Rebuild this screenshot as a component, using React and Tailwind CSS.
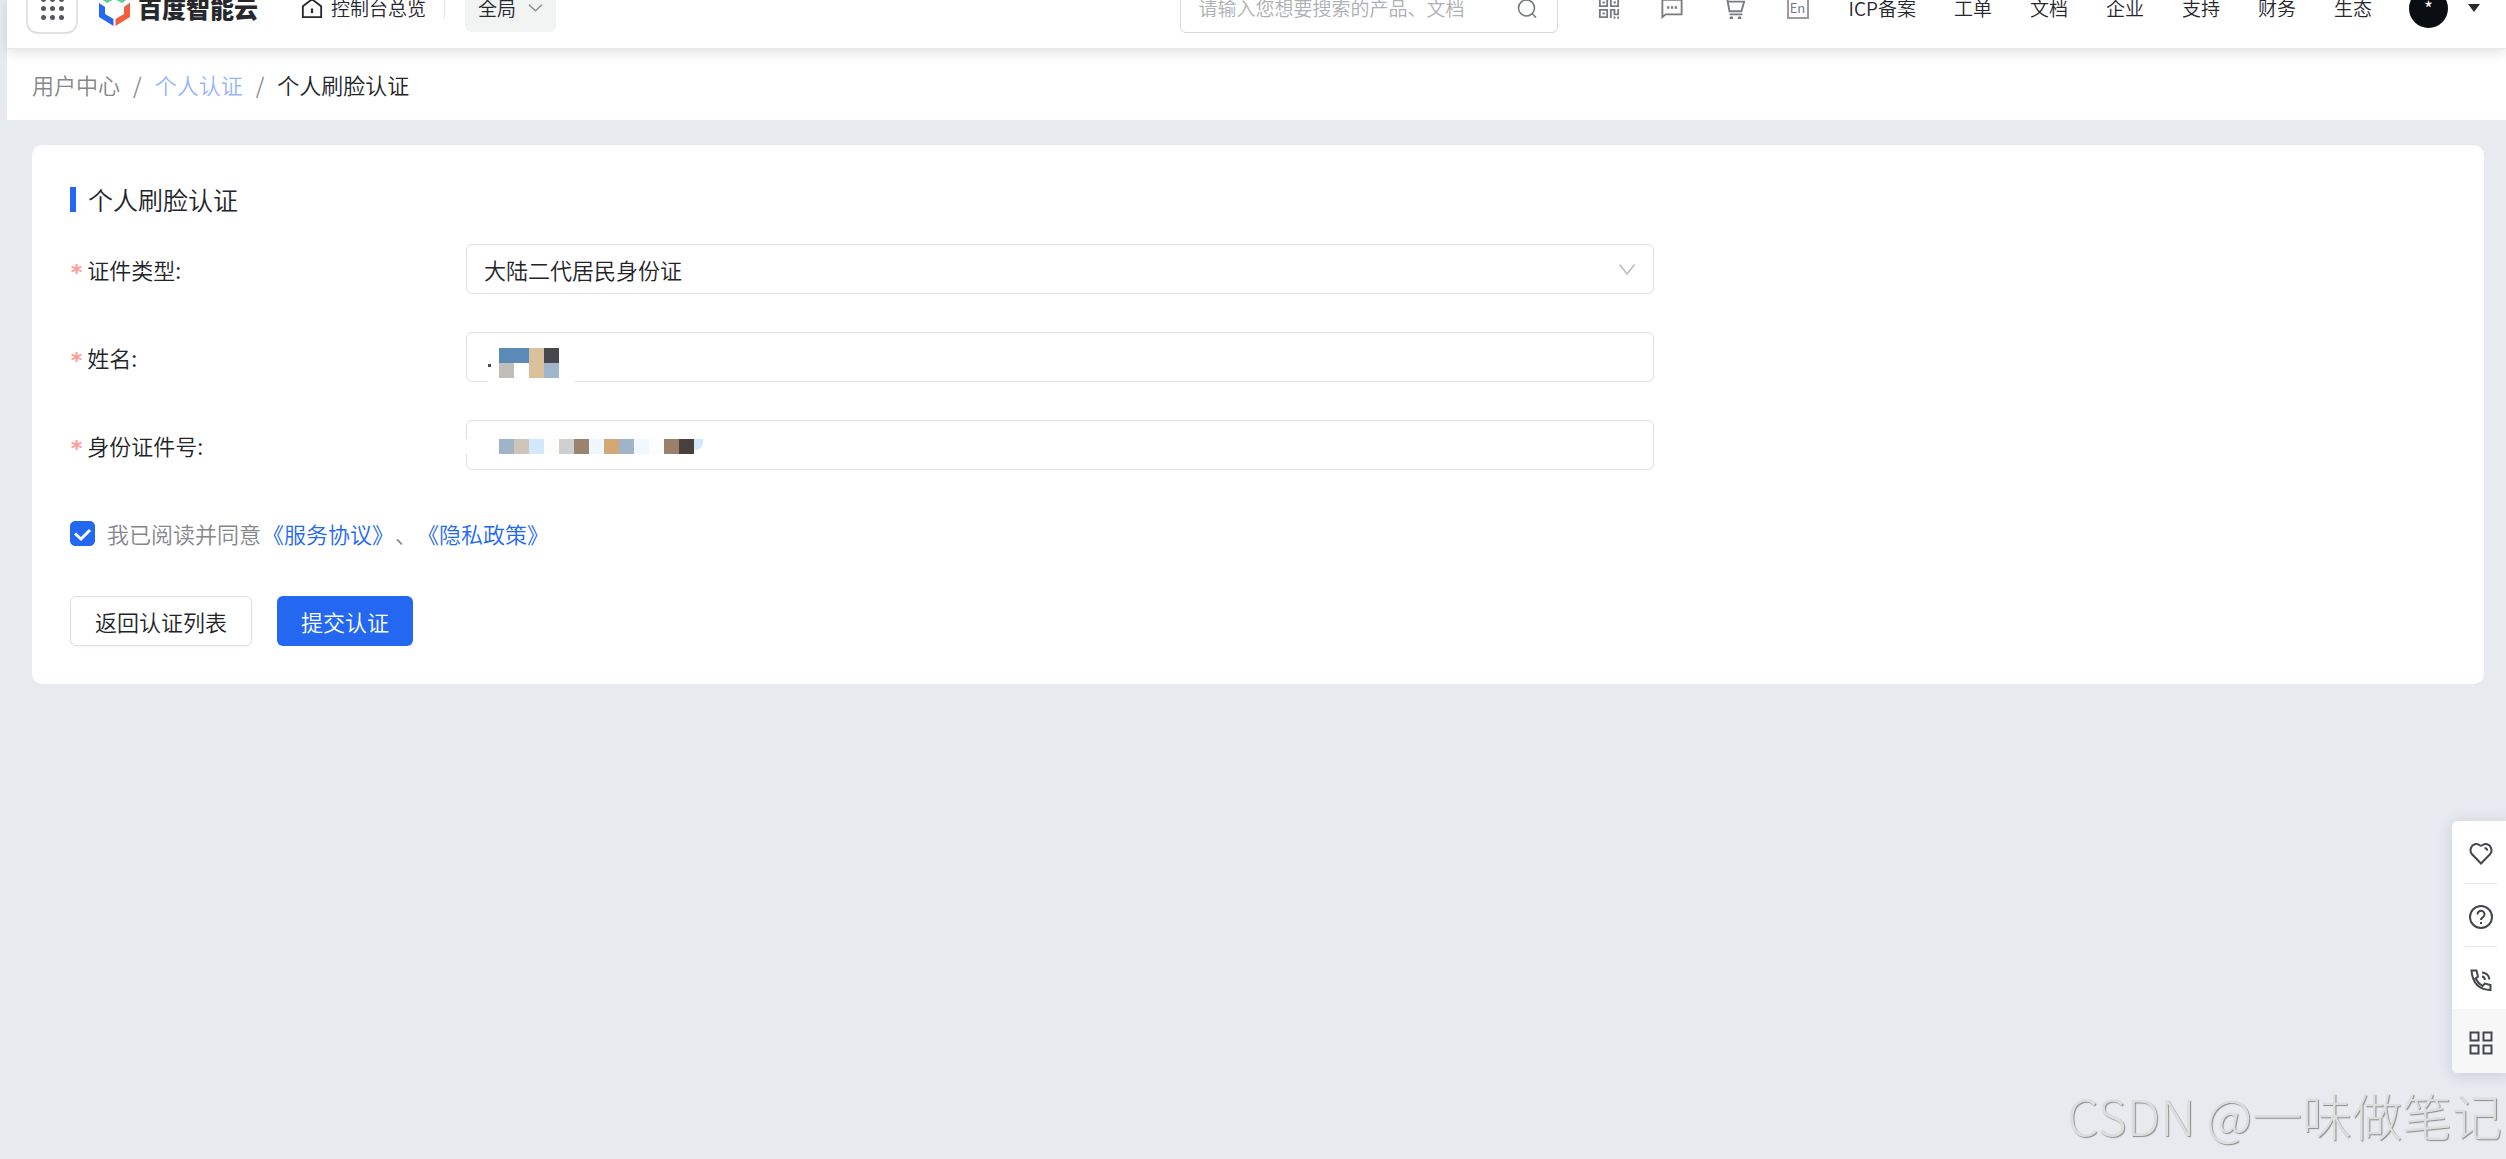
import { useState } from 'react';

const NAV_LINKS = ['ICP备案', '工单', '文档', '企业', '支持', '财务', '生态'];

const NAME_MASK = [
  ['bg-[#5a8bb8]', 'bg-[#5a8bb8]', 'bg-[#dac19c]', 'bg-[#48484a]'],
  ['bg-[#c1bdb9]', 'bg-white', 'bg-[#dac19c]', 'bg-[#9fb5cc]'],
];

const ID_MASK = [
  [
    'bg-[#9fb4c8]',
    'bg-[#cec4b7]',
    'bg-[#d3e8fc]',
    'bg-[#fdfcf8]',
    'bg-[#cdcfd1]',
    'bg-[#9c8370]',
    'bg-[#eef7fe]',
    'bg-[#d3a877]',
    'bg-[#9fb4c8]',
    'bg-[#f0f9ff]',
    'bg-[#fdfdfd]',
    'bg-[#9c7f6b]',
    'bg-[#47403c]',
  ],
];

function Icon({ size = 'size-[22px]', children }) {
  return (
    <svg
      className={`${size} shrink-0`}
      viewBox="0 0 24 24"
      fill="none"
      stroke="currentColor"
      strokeWidth={2}
      aria-hidden="true"
    >
      {children}
    </svg>
  );
}

function Logo() {
  return (
    <a href="#home" className="flex items-center gap-2">
      <svg className="h-9 w-[31px]" viewBox="0 0 31 36" aria-hidden="true">
        <path d="M0 13l6 4v7l8.500 5v7L0 27z" fill="#2468f2" />
        <path d="M31 12.500l-6 4.500v7l-8.500 5v7L31 27z" fill="#f0603f" />
        <path d="M1 8L15.500 0 30 8l-7 5-7.500-4L8 13z" fill="#5fcf8c" />
      </svg>
      <span className="text-[24px] leading-8 font-black text-[#26282c]">百度智能云</span>
    </a>
  );
}

function Header() {
  return (
    <header className="h-[49px] overflow-hidden border-b border-[#e9e9e9] bg-white">
      <div className="-mt-8 flex h-20 items-center pr-[26px] pl-[19px] text-[19px] leading-8 font-[350] text-[#26282e]">
        <button
          type="button"
          aria-label="产品"
          className="mr-[21px] flex size-[52px] shrink-0 items-center justify-center rounded-xl border-2 border-[#e2e2e2]"
        >
          <span className="grid grid-cols-3 gap-1">
            {Array.from({ length: 9 }, (_, i) => (
              <span key={i} className="size-[5px] rounded-full bg-[#55585e]" />
            ))}
          </span>
        </button>
        <Logo />

        <a href="#overview" className="ml-[43px] flex items-center gap-2">
          <Icon>
            <path d="M2 10l10-7.500L22 10v12H2z" />
            <path d="M12 12.500v5" strokeWidth={2.4} />
          </Icon>
          控制台总览
        </a>
        <span className="ml-[18px] h-[22px] w-px bg-[#e6e6e6]" />
        <button
          type="button"
          className="ml-5 flex h-12 items-center gap-3 rounded-md bg-[#f2f3f3] px-[13px]"
        >
          全局
          <svg className="h-2 w-[15px]" viewBox="0 0 16 8" fill="none" stroke="#8b8e94" strokeWidth="1.6" aria-hidden="true">
            <path d="M1 0.500l7 6.500 7-6.500" />
          </svg>
        </button>

        <div className="ml-auto flex h-[50px] w-[378px] items-center rounded-md border border-[#d9d9d9] pr-5 pl-[18px]">
          <input
            type="text"
            aria-label="搜索"
            placeholder="请输入您想要搜索的产品、文档"
            className="min-w-0 flex-1 outline-none placeholder:text-[#adb0b4]"
          />
          <svg className="size-5 text-[#777a80]" viewBox="0 0 20 20" fill="none" stroke="currentColor" strokeWidth="1.6" aria-hidden="true">
            <circle cx="9.5" cy="10" r="8" />
            <path d="M15 15.500l4 4" />
          </svg>
        </div>

        <div className="ml-10 flex items-center gap-[41px] text-[#777a80]">
          <a href="#app" aria-label="App">
            <Icon>
              <path d="M2 2h8v8H2zM14 2h8v8h-8zM2 14h8v8H2zM14 23v-9h4v5h4v-6" />
              <path d="M5 6h2.500M17 6h2.500M5 18h2.500M17 22.500h2M21 22.500h2" strokeWidth={2.4} />
            </Icon>
          </a>
          <a href="#message" aria-label="消息">
            <Icon>
              <path d="M1.500 3h21v16H5l-3.500 3z" />
              <path d="M6.500 11.500h2.500M10.800 11.500h2.500M15 11.500h2.500" strokeWidth={2.6} />
            </Icon>
          </a>
          <a href="#cart" aria-label="购物车">
            <Icon>
              <path d="M0 2h3.500L6 15.500h13l3-10.500H4.500M6 19h14" />
              <circle cx="8" cy="23" r="1" fill="currentColor" />
              <circle cx="17" cy="23" r="1" fill="currentColor" />
            </Icon>
          </a>
          <a
            href="#en"
            className="flex size-[22px] items-center justify-center border-2 border-[#9a9ca2] text-[13px] leading-4 font-normal"
          >
            En
          </a>
        </div>

        <nav className="ml-10 flex items-center gap-[38px]">
          {NAV_LINKS.map((label) => (
            <a key={label} href={`#${label}`}>
              {label}
            </a>
          ))}
        </nav>
        <button type="button" aria-label="账号" className="ml-[37px] flex items-center gap-5">
          <span className="flex size-[39px] items-center justify-center rounded-full bg-[#0a0d12] text-[19px] font-normal text-white">
            *
          </span>
          <svg className="h-2 w-3" viewBox="0 0 12 8" fill="#26282c" aria-hidden="true">
            <path d="M0 0h12L6 8z" />
          </svg>
        </button>
      </div>
    </header>
  );
}

function Mask({ rows }) {
  return (
    <div>
      {rows.map((cells, y) => (
        <div key={y} className="flex">
          {cells.map((color, x) => (
            <span key={x} className={`size-[15px] ${color}`} />
          ))}
        </div>
      ))}
    </div>
  );
}

function Field({ id, label, children }) {
  return (
    <div className="grid grid-cols-6 items-center">
      <label htmlFor={id} className="flex items-center">
        <span className="mr-1 pt-2 font-['DejaVu_Sans_Mono'] text-[22px] font-bold text-[#ff9a94]">*</span>
        {label}
        <span>:</span>
      </label>
      <div className="relative col-span-3">{children}</div>
    </div>
  );
}

const BOX = 'h-[50px] w-full rounded-md border border-[#dedfe1] bg-white px-[17px] outline-none';

function SideTools() {
  const cell = 'flex h-[62px] items-center justify-center pt-1';
  return (
    <aside className="fixed top-[821px] -right-1 w-[58px] overflow-hidden rounded-l-md bg-white text-[#43464d] shadow-[0_2px_16px_rgba(20,30,60,0.14)]">
      <a href="#like" aria-label="收藏" className={cell}>
        <Icon size="size-6">
          <path d="M12 21.500L2.800 12A6 6 0 0 1 2 6a5.500 5.500 0 0 1 9-2.500q1 .6 2 0A5.500 5.500 0 0 1 22 6a6 6 0 0 1-.8 6z" />
          <path d="M15.500 6q2 0 3 2.500" />
        </Icon>
      </a>
      <div className="mx-[13px] h-px bg-[#e8e8ea]" />
      <a href="#help" aria-label="帮助" className={cell}>
        <Icon size="size-6">
          <circle cx="12" cy="12" r="11" />
          <path d="M8.500 9.500a3.500 3.500 0 1 1 5.500 2.700q-2 1.100-2 2.800" />
          <path d="M12 17v2" />
        </Icon>
      </a>
      <div className="mx-[13px] h-px bg-[#e8e8ea]" />
      <a href="#phone" aria-label="电话" className={cell}>
        <Icon size="size-6">
          <path d="M2.500 2.500h5l1.500 6-2.500 2q2.500 5 7 7.500l2.500-2.500 5.500 1.500v5Q4 21.500 2.500 2.500z" />
          <path d="M13 8.500q2.500 0 3 3.500M13 4.500q6.500.5 7.500 7" />
        </Icon>
      </a>
      <a href="#more" aria-label="更多" className="flex h-16 items-center justify-center bg-[#f7f7f8] pt-1">
        <Icon size="size-6">
          <path d="M1.500 1.500h8v8h-8zM14.500 1.500h8v8h-8zM1.500 14.500h8v8h-8zM14.500 14.500h8v8h-8z" />
        </Icon>
      </a>
    </aside>
  );
}

export default function App() {
  const [agreed, setAgreed] = useState(true);

  return (
    <div className="relative min-h-screen overflow-hidden bg-[#e7eaef] pl-[7px] font-['Noto_Sans_CJK_SC',sans-serif] text-[22px] leading-8 font-[350] text-[#222428]">
      <div className="relative z-10 shadow-[0_3px_12px_rgba(0,0,0,0.13)]">
        <Header />
      </div>

      {/* Breadcrumb */}
      <nav className="flex h-[71px] items-center gap-[13px] bg-white pb-[2px] pl-[25px] text-[#85878c]">
        <a href="#user">用户中心</a>
        <span>/</span>
        <a href="#personal" className="text-[#98b5fb]">
          个人认证
        </a>
        <span>/</span>
        <span className="text-[#222428]">个人刷脸认证</span>
      </nav>

      <main className="mt-[25px] mr-[22px] ml-[25px] rounded-[10px] bg-white px-[38px] pt-[38px] pb-[38px]">
        <h1 className="flex h-8 items-center gap-3 text-[25px]">
          <span className="h-[25px] w-[6px] bg-[#2468f2]" />
          个人刷脸认证
        </h1>

        <form className="mt-[29px] flex flex-col gap-[38px]" onSubmit={(e) => e.preventDefault()}>
          <Field id="cert-type" label="证件类型">
            <select id="cert-type" className={`${BOX} appearance-none`}>
              <option>大陆二代居民身份证</option>
            </select>
            <svg
              className="pointer-events-none absolute top-5 right-[19px] h-[11px] w-4"
              viewBox="0 0 16 11"
              fill="none"
              stroke="#bfbfbf"
              strokeWidth="1.6"
              aria-hidden="true"
            >
              <path d="M0.500 0.500L8 10l7.500-9.500" />
            </svg>
          </Field>

          <Field id="name" label="姓名">
            <input id="name" type="text" className={BOX} />
            {/* Masked value */}
            <div className="pointer-events-none absolute top-4 left-[22px] flex h-[34px] w-[87px] items-start bg-white pl-[11px]">
              <Mask rows={NAME_MASK} />
            </div>
            <span className="absolute top-8 left-[22px] h-[3px] w-[3px] bg-[#5a4a48]" />
          </Field>

          <Field id="id-number" label="身份证件号">
            <input id="id-number" type="text" className={BOX} />
            <div className="pointer-events-none absolute top-[19px] left-0 flex bg-white pl-[33px]">
              <Mask rows={ID_MASK} />
              <span className="h-[11px] w-[9px] rounded-br-lg bg-[#d3e8fc]" />
            </div>
          </Field>

          <div className="flex h-[50px] items-center">
            <span className="relative mr-3 flex size-[25px]">
              <input
                id="agree"
                type="checkbox"
                checked={agreed}
                onChange={(e) => setAgreed(e.target.checked)}
                className="size-[25px] appearance-none rounded-[5px] border border-[#dedfe1] checked:border-[#2468f2] checked:bg-[#2468f2]"
              />
              {agreed && (
                <svg
                  className="pointer-events-none absolute inset-0 size-[25px]"
                  viewBox="0 0 25 25"
                  fill="none"
                  stroke="#fff"
                  strokeWidth="3"
                  aria-hidden="true"
                >
                  <path d="M5 12.500l6 5.500 9-9" />
                </svg>
              )}
            </span>
            <label htmlFor="agree" className="mr-px text-[#85878c]">
              我已阅读并同意
            </label>
            <a href="#service" className="mr-px text-[#2468f2]">
              《服务协议》
            </a>
            <span className="text-[#85878c]">、</span>
            <a href="#privacy" className="text-[#2468f2]">
              《隐私政策》
            </a>
          </div>

          <div className="flex gap-[25px]">
            <button
              type="button"
              className="h-[50px] rounded-md border border-[#dedfe1] bg-white px-6 shadow-[0_2px_2px_rgba(0,0,0,0.03)]"
            >
              返回认证列表
            </button>
            <button type="submit" className="h-[50px] rounded-md bg-[#2468f2] px-6 text-white">
              提交认证
            </button>
          </div>
        </form>
      </main>

      <SideTools />
      <p className="fixed right-1 bottom-5 text-[50px] leading-[50px] font-light text-[#dcdddd] [text-shadow:1px_1px_1px_#8c8c8c]">
        CSDN @一味做笔记
      </p>
    </div>
  );
}
